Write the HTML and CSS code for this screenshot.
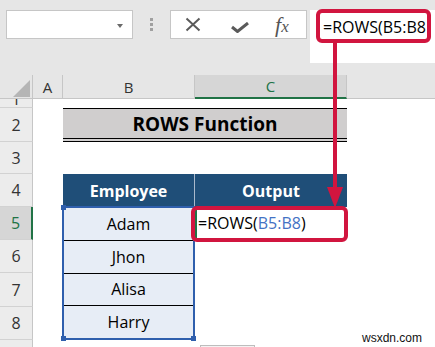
FILE: index.html
```html
<!DOCTYPE html>
<html lang="en">
<head>
    <meta charset="UTF-8">
    <title>ROWS Function</title>
    <link rel="stylesheet" href="styles.css">
</head>
<body>
    <div class="ribbon">
        <div class="name-box"><span class="drop"></span></div>
        <div class="grip"><i></i><i></i><i></i></div>
        <div class="fx-box">
            <svg class="ic-cancel" width="16" height="15" viewBox="0 0 16 15">
                <path d="M1.5 1.5 L14.5 13.5 M14.5 1.5 L1.5 13.5" stroke="#5a5a5a" stroke-width="2" fill="none"/>
            </svg>
            <svg class="ic-enter" width="18" height="11" viewBox="0 0 18 11">
                <path d="M1 5 L6.5 9.5 L17 1" stroke="#5a5a5a" stroke-width="3" fill="none"/>
            </svg>
            <span class="ic-fx">f<small>x</small></span>
        </div>
        <div class="formula">=ROWS(B5:B8</div>
    </div>

    <div class="sheet">
        <div class="corner">
            <svg width="33" height="24" viewBox="0 0 33 24"><polygon points="13,22 30,22 30,5" fill="#b5b5b5"/></svg>
        </div>
        <div class="col-head ca">A</div>
        <div class="col-head cb">B</div>
        <div class="col-head cc active">C</div>
        <div class="col-head cx"></div>

        <div class="rh r1"><span>1</span></div>
        <div class="rh r2">2</div>
        <div class="rh r3">3</div>
        <div class="rh r4">4</div>
        <div class="rh r5 active">5</div>
        <div class="rh r6">6</div>
        <div class="rh r7">7</div>
        <div class="rh r8">8</div>
        <div class="rh r9"></div>

        <div class="title">ROWS Function</div>
        <div class="th h1">Employee</div>
        <div class="th h2">Output</div>

        <div class="names">
            <div class="name">Adam</div>
            <div class="name">Jhon</div>
            <div class="name">Alisa</div>
            <div class="name">Harry</div>
            <span class="handle tl"></span>
            <span class="handle bl"></span>
            <span class="handle br"></span>
        </div>
        <div class="c5">=ROWS(<span class="ref">B5:B8</span>)</div>
    </div>

    <!-- callout drawn over the sheet -->
    <svg class="callout" width="435" height="347" viewBox="0 0 435 347">
        <rect x="318" y="11" width="111" height="30" rx="4" fill="none" stroke="#d1153f" stroke-width="4"/>
        <line x1="335" y1="43" x2="335" y2="192" stroke="#d1153f" stroke-width="4"/>
        <polygon points="327,187 343,187 335,208" fill="#d1153f"/>
        <rect x="193" y="208" width="153" height="32" rx="4" fill="none" stroke="#d1153f" stroke-width="4"/>
    </svg>

    <div class="paste-opt"></div>
    <div class="watermark">wsxdn.com</div>
</body>
</html>
```

FILE: styles.css
```css
body {
    margin: 0;
    width: 435px;
    height: 347px;
    overflow: hidden;
    position: relative;
    background: #fff;
    font-family: "Open Sans", Arial, sans-serif;
    color: #000;
}
.ribbon {
    display: flex;
    align-items: flex-start;
    height: 75px;
    box-sizing: border-box;
    padding-top: 10px;
    background: #e6e6e6;
}
.name-box {
    position: relative;
    margin-left: 6px;
    width: 127px;
    height: 29px;
    box-sizing: border-box;
    border: 1px solid #c6c6c6;
    background: #fff;
}
.drop {
    position: absolute;
    right: 9px;
    top: 13px;
    border-left: 3px solid transparent;
    border-right: 3px solid transparent;
    border-top: 4px solid #6a6a6a;
}
.grip {
    width: 37px;
    display: flex;
    flex-direction: column;
    align-items: center;
    gap: 2px;
    padding-top: 8px;
}
.grip i {
    display: block;
    width: 3px;
    height: 3px;
    background: #a0a0a0;
}
.fx-box {
    display: flex;
    align-items: center;
    width: 137px;
    height: 29px;
    box-sizing: border-box;
    border: 1px solid #c6c6c6;
    background: #fff;
}
.ic-cancel {
    margin-left: 14px;
}
.ic-enter {
    margin-left: 30px;
    margin-top: 6px;
}
.ic-fx {
    margin-left: 26px;
    font-family: "Liberation Serif", serif;
    font-style: italic;
    font-size: 22px;
    color: #555;
    line-height: 1;
}
.ic-fx small {
    font-size: 17px;
}
.formula {
    flex: 1;
    margin-left: 3px;
    height: 53px;
    box-sizing: border-box;
    padding: 6px 0 0 13px;
    background: #fff;
    font-size: 16px;
    line-height: 22px;
    white-space: nowrap;
    overflow: hidden;
}

.sheet {
    display: grid;
    grid-template-columns: 33px 30px 132px 152px 1fr;
    grid-template-rows: 24px 9px 34px 32px 33px 33px 33px 34px 33px 1fr;
    grid-template-areas:
        "corner ca cb cc cx"
        "r1 . . . ."
        "r2 . title title ."
        "r3 . . . ."
        "r4 . h1 h2 ."
        "r5 . names c5 ."
        "r6 . names . ."
        "r7 . names . ."
        "r8 . names . ."
        "r9 . . . .";
    height: 272px;
}
.corner { grid-area: corner; background: #e6e6e6; border-right: 1px solid #c6c6c6; border-bottom: 1px solid #c6c6c6; box-sizing: border-box; }
.corner svg { display: block; }
.col-head {
    display: flex;
    align-items: center;
    justify-content: center;
    background: #e6e6e6;
    border-right: 1px solid #c6c6c6;
    border-bottom: 1px solid #c6c6c6;
    font-size: 15px;
    color: #333;
}
.ca { grid-area: ca; }
.cb { grid-area: cb; }
.cc { grid-area: cc; }
.cx { grid-area: cx; border-right: none; }
.col-head.active {
    background: #d6d6d6;
    color: #217346;
    border-bottom: 2px solid #217346;
}

.rh {
    display: flex;
    align-items: center;
    justify-content: center;
    background: #ececec;
    border-right: 1px solid #c6c6c6;
    border-bottom: 1px solid #d2d2d2;
    font-size: 16px;
    color: #333;
    overflow: hidden;
}
.r1 { grid-area: r1; align-items: flex-start; }
.r1 span { display: block; margin-top: -10px; line-height: 20px; }
.r2 { grid-area: r2; }
.r3 { grid-area: r3; }
.r4 { grid-area: r4; }
.r5 { grid-area: r5; }
.r6 { grid-area: r6; }
.r7 { grid-area: r7; }
.r8 { grid-area: r8; }
.r9 { grid-area: r9; border-bottom: none; }
.rh.active {
    background: #d6d6d6;
    color: #217346;
    border-right: 2px solid #217346;
}

.title {
    grid-area: title;
    display: flex;
    align-items: center;
    justify-content: center;
    background: #d0cece;
    border-top: 1px solid #000;
    border-bottom: 4px double #000;
    font-size: 19px;
    font-weight: bold;
}
.th {
    display: flex;
    align-items: center;
    justify-content: center;
    background: #1f4e78;
    color: #fff;
    font-size: 16px;
    font-weight: bold;
}
.h1 { grid-area: h1; border-right: 1px solid #a9b9cc; }
.h2 { grid-area: h2; }

.names {
    grid-area: names;
    position: relative;
    display: flex;
    flex-direction: column;
    border: 2px solid #2f5fad;
    margin: -1px 0 0 -1px;
    background: #e7edf6;
}
.name {
    flex: 1;
    display: flex;
    align-items: center;
    justify-content: center;
    font-size: 16px;
}
.name + .name {
    border-top: 1px solid #000;
}
.handle {
    position: absolute;
    width: 5px;
    height: 5px;
    background: #2f5fad;
}
.handle.tl { left: -3px; top: -3px; }
.handle.bl { left: -3px; bottom: -3px; }
.handle.br { right: -3px; bottom: -3px; }

.c5 {
    grid-area: c5;
    border-left: 2px solid #217346;
    padding-left: 1px;
    font-size: 16px;
    line-height: 33px;
    white-space: nowrap;
}
.ref {
    color: #4472c4;
}

.callout {
    position: absolute;
    left: 0;
    top: 0;
    pointer-events: none;
}
.paste-opt {
    position: absolute;
    left: 200px;
    top: 345px;
    width: 53px;
    height: 10px;
    border: 1px solid #bdbdbd;
    background: #f3f3f3;
}
.watermark {
    position: absolute;
    left: 362px;
    top: 331px;
    font-family: "Liberation Sans", Arial, sans-serif;
    font-size: 12px;
    color: #111;
}
```
